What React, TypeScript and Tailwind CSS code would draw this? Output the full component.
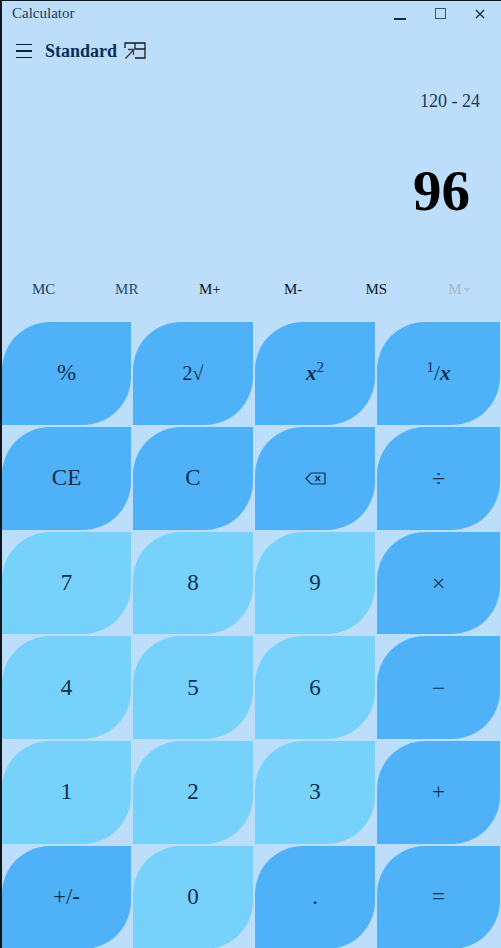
const keys = [
  { label: "%", tone: "op" },
  { label: "2√", tone: "op", size: "text-[20px]" },
  { label: "x2", tone: "op" },
  { label: "1/x", tone: "op" },
  { label: "CE", tone: "op" },
  { label: "C", tone: "op" },
  { label: "back", tone: "op" },
  { label: "÷", tone: "op", size: "text-[24px]" },
  { label: "7", tone: "num" },
  { label: "8", tone: "num" },
  { label: "9", tone: "num" },
  { label: "×", tone: "op", size: "text-[24px]" },
  { label: "4", tone: "num" },
  { label: "5", tone: "num" },
  { label: "6", tone: "num" },
  { label: "−", tone: "op", size: "text-[24px]" },
  { label: "1", tone: "num" },
  { label: "2", tone: "num" },
  { label: "3", tone: "num" },
  { label: "+", tone: "op" },
  { label: "+/-", tone: "op" },
  { label: "0", tone: "num" },
  { label: ".", tone: "op" },
  { label: "=", tone: "op" },
]

function BackspaceIcon() {
  return (
    <svg width="21" height="13" viewBox="0 0 21 13" fill="none" stroke="#0f2f4d" strokeWidth="1.2">
      <path d="M6 1H20V12H6L1 6.5Z" />
      <path d="M10.5 4L15 9M15 4L10.5 9" />
    </svg>
  )
}

function ModeIcon() {
  return (
    <svg width="22" height="18" viewBox="0 0 22 18" fill="none" stroke="#1a1a1a" strokeWidth="1.3">
      <path d="M1 6V1H21V16H11M11 1V7H21" />
      <path d="M1.5 16.5L9.5 8M4 7.5H9.5V13" stroke="#3c3c3c" />
    </svg>
  )
}

function KeyLabel({ label }: { label: string }) {
  if (label === "back") return <BackspaceIcon />
  if (label === "x2") {
    return (
      <span className="text-[21px]">
        <i className="font-bold">x</i><sup className="text-[15px]">2</sup>
      </span>
    )
  }
  if (label === "1/x") {
    return (
      <span className="text-[21px]">
        <sup className="text-[15px]">1</sup>/<i className="font-bold">x</i>
      </span>
    )
  }
  return <>{label}</>
}

export default function App() {
  return (
    <div className="w-[501px] h-[948px] overflow-hidden border-l-2 border-t border-[#12161c] bg-[#bcdefb] text-[#0f2f4d] font-['Liberation_Serif',serif]">

      {/* title bar */}
      <div className="flex items-center justify-between h-[25px] pl-[10px] pr-[16px]">
        <span className="text-[15px] text-[#1f3c5a]">Calculator</span>
        <div className="flex items-center gap-[29px]">
          <span className="mt-[10px] w-[12px] h-[2px] bg-[#0f2f4d]" />
          <span className="w-[11px] h-[11px] border border-[#3b5570]" />
          <svg width="10" height="10" viewBox="0 0 10 10" stroke="#0f2f4d" strokeWidth="1.4">
            <path d="M1 1L9 9M9 1L1 9" />
          </svg>
        </div>
      </div>

      {/* header */}
      <div className="flex items-center h-[50px] pl-[14px]">
        <div className="flex flex-col gap-[5px] w-[16px]">
          <span className="h-[1.5px] bg-[#10202e]" />
          <span className="h-[1.5px] bg-[#10202e]" />
          <span className="h-[1.5px] bg-[#10202e]" />
        </div>
        <span className="ml-[13px] text-[18px] font-bold text-[#06305a]">Standard</span>
        <span className="ml-[7px]"><ModeIcon /></span>
      </div>

      {/* display */}
      <div className="flex justify-end pr-[21px] h-[44px] pt-[12px] text-[18px] text-[#1f3550]">120 - 24</div>
      <div className="flex justify-end pr-[31px] h-[149px] pt-[26px] text-[57px] leading-[90px] font-bold text-black">96</div>

      {/* memory row */}
      <div className="flex items-center h-[39px] pt-[2px] text-[15px]">
        <span className="flex-1 text-center text-[#173f63]">MC</span>
        <span className="flex-1 text-center text-[#2a4a66]">MR</span>
        <span className="flex-1 text-center text-[#0b1520]">M+</span>
        <span className="flex-1 text-center text-[#0b1520]">M-</span>
        <span className="flex-1 text-center text-[#0b1520]">MS</span>
        <span className="flex-1 flex justify-center items-center gap-[1px] text-[#a3b7c8]">
          M<span className="w-0 h-0 mt-[1px] border-x-[4px] border-t-[4px] border-x-transparent border-t-[#b3c3d0]" />
        </span>
      </div>

      {/* keypad */}
      <div className="grid grid-cols-[129px_120px_120px_123px] auto-rows-[102.8px] gap-[2px] mt-[14px]">
        {keys.map((key) => (
          <div
            key={key.label}
            className={`flex items-center justify-center rounded-tl-[48px] rounded-br-[48px] ${key.tone === "num" ? "bg-[#76d1fb]" : "bg-[#4fb2f8]"} ${key.size ?? "text-[23px]"} text-[#0f2f4d]`}
          >
            <KeyLabel label={key.label} />
          </div>
        ))}
      </div>
    </div>
  )
}
